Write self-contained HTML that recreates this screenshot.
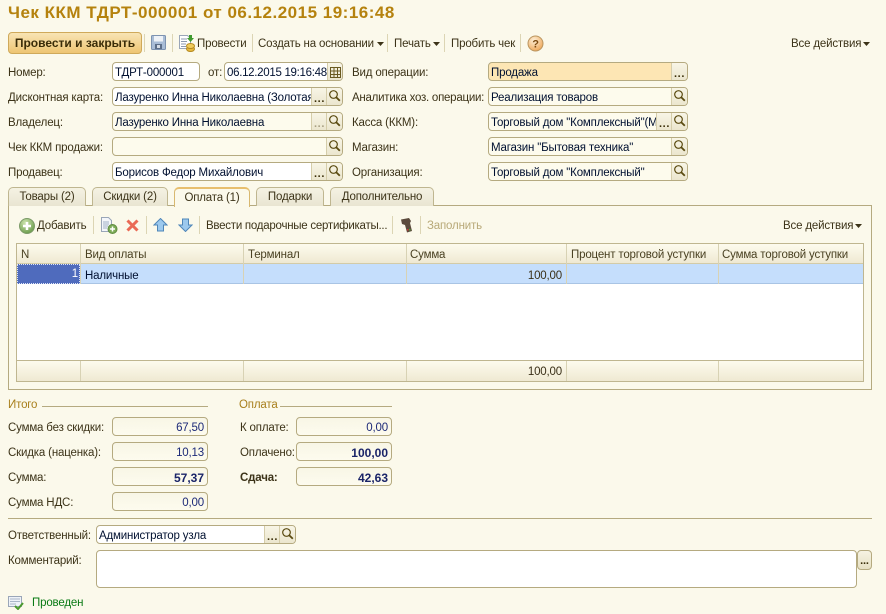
<!DOCTYPE html>
<html lang="ru"><head><meta charset="utf-8"><title>Чек ККМ</title>
<style>
html,body{margin:0;padding:0;width:886px;height:614px;overflow:hidden;background:#fbf9eb}
body{position:relative;font:11.5px "Liberation Sans",sans-serif;color:#3c3318;letter-spacing:-.17px}
div,span.a,svg{position:absolute}
.t{white-space:nowrap;line-height:14px;height:14px;margin-top:1px}
.f{box-sizing:border-box;height:19px;border:1px solid #b5aa80;border-radius:4px;background:#fff;overflow:hidden;color:#001030;line-height:20px;white-space:nowrap;padding-left:2px}
.y{background:#fdfbed}
.n{background:linear-gradient(#f8f6e6,#fdfbee);text-align:right;padding-right:3px;color:#1d2a78}
.b{font-weight:bold;font-size:12px;color:#1a2468;letter-spacing:0}
.bt{position:absolute;top:0;bottom:0;width:15px;background:linear-gradient(#f8f5e6,#ebe6ce);border-left:1px solid #d5cdaa;color:#3a2e08;text-align:center}
.d{right:15px;font-weight:bold;font-size:11px;line-height:22px;letter-spacing:.6px}
.s{right:0}
.s svg{left:1px;top:1px}
.sep{width:1px;background:#dcd5b4}
.tab{box-sizing:border-box;top:187px;height:19px;border:1px solid #bfb690;border-bottom:none;border-radius:5px 5px 0 0;background:linear-gradient(#f5f2e3,#e9e5d2);text-align:center;line-height:19px;color:#3c3318}
.col{width:1px;background:#d8d2b4}
.h{top:247px;color:#4a4122}
.l{height:1px;background:#b5aa80}
</style></head><body>
<svg width="0" height="0" style="position:absolute"><defs>
<g id="m"><circle cx="5.500" cy="5.500" r="3.800" fill="none" stroke="#5a4a10" stroke-width="1.200"/><path d="M8.200 8.200l3.600 3.600" stroke="#5a4a10" stroke-width="1.800"/></g>
</defs></svg>

<div class="t" style="left:8px;top:2px;height:20px;line-height:20px;font-size:17px;font-weight:bold;color:#b5820e;letter-spacing:.5px">Чек ККМ ТДРТ-000001 от 06.12.2015 19:16:48</div>

<!-- main toolbar -->
<div style="left:8px;top:32px;width:134px;height:22px;box-sizing:border-box;border:1px solid #cfa95a;border-radius:4px;background:linear-gradient(#f8e4b4,#eec573);text-align:center;font-weight:bold;font-size:12px;line-height:21px;color:#3a2c08;letter-spacing:0">Провести и закрыть</div>
<div class="sep" style="left:144px;top:34px;height:18px"></div>
<svg style="left:151px;top:35px" width="15" height="15"><rect x=".5" y=".5" width="14" height="14" rx="1" fill="#a9bdd6" stroke="#7d93b0"/><rect x="3" y="1" width="9" height="5.500" fill="#eef2f7"/><rect x="4" y="9" width="7" height="5" fill="#5d6f88"/><rect x="6" y="10" width="3" height="3" fill="#d6dde6"/></svg>
<div class="sep" style="left:172px;top:34px;height:18px"></div>
<svg style="left:179px;top:34px" width="16" height="18"><path d="M.5 1.500h8l3 3v10h-11z" fill="#fff" stroke="#9aa6b8"/><path d="M2 5h6M2 7.500h6M2 10h5M2 12.500h5" stroke="#8c9ab0"/><ellipse cx="11.500" cy="15" rx="4" ry="2.500" fill="#e7b93e" stroke="#b58a20"/><ellipse cx="11.500" cy="12" rx="4" ry="2.500" fill="#f1cc5c" stroke="#b58a20"/><path d="M10 1h3v3h2l-3.500 4L8 4h2z" fill="#3f9a2e"/></svg>
<div class="t" style="left:197px;top:36px">Провести</div>
<div class="sep" style="left:252px;top:34px;height:18px"></div>
<div class="t" style="left:258px;top:36px">Создать на основании</div>
<svg style="left:377px;top:42px" width="7" height="4"><path d="M0 0h7L3.500 4z" fill="#3c3318"/></svg>
<div class="sep" style="left:387px;top:34px;height:18px"></div>
<div class="t" style="left:394px;top:36px">Печать</div>
<svg style="left:433px;top:42px" width="7" height="4"><path d="M0 0h7L3.500 4z" fill="#3c3318"/></svg>
<div class="sep" style="left:444px;top:34px;height:18px"></div>
<div class="t" style="left:451px;top:36px">Пробить чек</div>
<div class="sep" style="left:520px;top:34px;height:18px"></div>
<svg style="left:527px;top:35px" width="17" height="17"><defs><radialGradient id="q" cx=".4" cy=".3" r=".8"><stop offset="0" stop-color="#fdf0d8"/><stop offset="1" stop-color="#eda04c"/></radialGradient></defs><circle cx="8.500" cy="8.500" r="7.500" fill="url(#q)" stroke="#b9955f"/><text x="8.500" y="12.500" text-anchor="middle" font-family="Liberation Sans" font-size="11" font-weight="bold" fill="#7c4a10">?</text></svg>
<div class="t" style="left:791px;top:36px">Все действия</div>
<svg style="left:863px;top:42px" width="7" height="4"><path d="M0 0h7L3.500 4z" fill="#3c3318"/></svg>

<!-- labels left -->
<div class="t" style="left:8px;top:65px">Номер:</div>
<div class="t" style="left:8px;top:90px">Дисконтная карта:</div>
<div class="t" style="left:8px;top:115px">Владелец:</div>
<div class="t" style="left:8px;top:140px">Чек ККМ продажи:</div>
<div class="t" style="left:8px;top:165px">Продавец:</div>
<div class="t" style="left:208px;top:65px">от:</div>
<div class="t" style="left:352px;top:65px">Вид операции:</div>
<div class="t" style="left:352px;top:90px;letter-spacing:-.25px">Аналитика хоз. операции:</div>
<div class="t" style="left:352px;top:115px">Касса (ККМ):</div>
<div class="t" style="left:352px;top:140px">Магазин:</div>
<div class="t" style="left:352px;top:165px">Организация:</div>

<!-- fields left -->
<div class="f" style="left:112px;top:62px;width:88px">ТДРТ-000001</div>
<div class="f" style="left:224px;top:62px;width:119px;letter-spacing:-.3px">06.12.2015 19:16:48<span class="bt s" style="width:14px"><svg width="11" height="11" style="left:2px;top:4px"><path d="M.5 .5h10v10h-10zM.5 4h10M.5 7.500h10M4 .5v10M7.500 .5v10" fill="none" stroke="#6a5a20"/></svg></span></div>
<div class="f" style="left:112px;top:87px;width:231px">Лазуренко Инна Николаевна (Золотая<span class="bt d">...</span><span class="bt s"><svg width="13" height="13"><use href="#m"/></svg></span></div>
<div class="f y" style="left:112px;top:112px;width:231px">Лазуренко Инна Николаевна<span class="bt d" style="color:#a8a083">...</span><span class="bt s"><svg width="13" height="13"><use href="#m"/></svg></span></div>
<div class="f y" style="left:112px;top:137px;width:231px"><span class="bt s"><svg width="13" height="13"><use href="#m"/></svg></span></div>
<div class="f" style="left:112px;top:162px;width:231px">Борисов Федор Михайлович<span class="bt d">...</span><span class="bt s"><svg width="13" height="13"><use href="#m"/></svg></span></div>

<!-- fields right -->
<div class="f" style="left:488px;top:62px;width:200px;background:#fde6b4">Продажа<span class="bt s d" style="right:0;line-height:22px">...</span></div>
<div class="f y" style="left:488px;top:87px;width:200px">Реализация товаров<span class="bt s"><svg width="13" height="13"><use href="#m"/></svg></span></div>
<div class="f y" style="left:488px;top:112px;width:200px">Торговый дом "Комплексный"(М<span class="bt d">...</span><span class="bt s"><svg width="13" height="13"><use href="#m"/></svg></span></div>
<div class="f y" style="left:488px;top:137px;width:200px">Магазин "Бытовая техника"<span class="bt s"><svg width="13" height="13"><use href="#m"/></svg></span></div>
<div class="f y" style="left:488px;top:162px;width:200px">Торговый дом "Комплексный"<span class="bt s"><svg width="13" height="13"><use href="#m"/></svg></span></div>

<!-- tabs panel -->
<div style="left:8px;top:205px;width:864px;height:185px;box-sizing:border-box;border:1px solid #b5aa80"></div>
<div class="tab" style="left:8px;width:78px">Товары (2)</div>
<div class="tab" style="left:92px;width:76px">Скидки (2)</div>
<div class="tab" style="left:174px;width:76px;height:20px;background:#fbf9eb;border-color:#d8b870;border-top:2px solid #e8bf6e;line-height:18px">Оплата (1)</div>
<div class="tab" style="left:256px;width:68px">Подарки</div>
<div class="tab" style="left:330px;width:104px">Дополнительно</div>

<!-- panel toolbar -->
<svg style="left:19px;top:218px" width="16" height="16"><defs><radialGradient id="g" cx=".4" cy=".3" r=".8"><stop offset="0" stop-color="#cfe5b0"/><stop offset="1" stop-color="#5f9440"/></radialGradient></defs><circle cx="8" cy="8" r="7.500" fill="url(#g)" stroke="#7c9a68"/><path d="M8 4v8M4 8h8" stroke="#fff" stroke-width="2.500"/></svg>
<div class="t" style="left:37px;top:218px">Добавить</div>
<div class="sep" style="left:93px;top:216px;height:18px"></div>
<svg style="left:101px;top:217px" width="17" height="17"><path d="M.5 .5h7l3 3v11H.5z" fill="#f4f6fa" stroke="#9aa6b8"/><path d="M2 5h6M2 7h6M2 9h5M2 11h4" stroke="#9fb0c6"/><circle cx="11.500" cy="12" r="4.500" fill="#7dab58" stroke="#5f8c40"/><path d="M11.500 9.500v5M9 12h5" stroke="#fff" stroke-width="1.500"/></svg>
<svg style="left:126px;top:219px" width="13" height="13"><path d="M1.500 1.500l10 10M11.500 1.500l-10 10" stroke="#ea6a55" stroke-width="3"/></svg>
<div class="sep" style="left:146px;top:216px;height:18px"></div>
<svg style="left:153px;top:218px" width="15" height="14"><path d="M7.500 .5L14 7h-3.500v6h-6V7H1z" fill="#9cc9ee" stroke="#4f86b8"/></svg>
<svg style="left:178px;top:218px" width="15" height="14"><path d="M7.500 13.500L14 7h-3.500V1h-6v6H1z" fill="#9cc9ee" stroke="#4f86b8"/></svg>
<div class="sep" style="left:199px;top:216px;height:18px"></div>
<div class="t" style="left:206px;top:218px;letter-spacing:-.25px">Ввести подарочные сертификаты...</div>
<div class="sep" style="left:392px;top:216px;height:18px"></div>
<svg style="left:400px;top:218px" width="14" height="15"><path d="M1 1.500l8-1.500 2 3-1 2 2 8-5 1.500L5 7 2 6z" fill="#5b4a3c"/><rect x="7" y="11" width="1.500" height="1.500" fill="#c33"/><rect x="9" y="11" width="1.500" height="1.500" fill="#4a3"/></svg>
<div class="sep" style="left:420px;top:216px;height:18px"></div>
<div class="t" style="left:427px;top:218px;color:#b8a978">Заполнить</div>
<div class="t" style="left:783px;top:218px">Все действия</div>
<svg style="left:855px;top:224px" width="7" height="4"><path d="M0 0h7L3.500 4z" fill="#3c3318"/></svg>

<!-- grid -->
<div style="left:16px;top:243px;width:848px;height:139px;box-sizing:border-box;border:1px solid #bfb690;background:#fff"></div>
<div style="left:17px;top:244px;width:846px;height:20px;background:linear-gradient(#fdfbee,#efe9d2);border-bottom:1px solid #d3cba8;box-sizing:border-box"></div>
<div style="left:17px;top:264px;width:846px;height:20px;background:#c5defc;border-bottom:1px solid #a9c4e4;box-sizing:border-box"></div>
<div style="left:17px;top:264px;width:63px;height:20px;background:#4f6bbd;box-sizing:border-box;border:1px dotted #dfe6f8;color:#fff;text-align:right;line-height:19px;padding-right:1px">1</div>
<div style="left:17px;top:360px;width:846px;height:21px;background:linear-gradient(#fdfbee,#efe9d2);border-top:1px solid #bfb690;box-sizing:border-box"></div>
<div class="col" style="left:80px;top:244px;height:40px"></div><div class="col" style="left:243px;top:244px;height:40px"></div><div class="col" style="left:406px;top:244px;height:40px"></div><div class="col" style="left:566px;top:244px;height:40px"></div><div class="col" style="left:718px;top:244px;height:40px"></div>
<div class="col" style="left:80px;top:361px;height:20px"></div><div class="col" style="left:243px;top:361px;height:20px"></div><div class="col" style="left:406px;top:361px;height:20px"></div><div class="col" style="left:566px;top:361px;height:20px"></div><div class="col" style="left:718px;top:361px;height:20px"></div>
<div class="t h" style="left:21px">N</div>
<div class="t h" style="left:85px">Вид оплаты</div>
<div class="t h" style="left:248px">Терминал</div>
<div class="t h" style="left:410px">Сумма</div>
<div class="t h" style="left:571px">Процент торговой уступки</div>
<div class="t h" style="left:722px">Сумма торговой уступки</div>
<div class="t" style="left:85px;top:268px;color:#001030">Наличные</div>
<div class="t" style="left:500px;width:62px;text-align:right;top:268px;color:#3a3018">100,00</div>
<div class="t" style="left:500px;width:62px;text-align:right;top:364px;color:#3a3018">100,00</div>

<!-- totals -->
<div class="t" style="left:8px;top:397px;color:#a87f1c">Итого</div><div class="l" style="left:42px;top:406px;width:166px"></div>
<div class="t" style="left:239px;top:397px;color:#a87f1c">Оплата</div><div class="l" style="left:280px;top:406px;width:112px"></div>
<div class="t" style="left:8px;top:420px">Сумма без скидки:</div>
<div class="t" style="left:8px;top:445px">Скидка (наценка):</div>
<div class="t" style="left:8px;top:470px">Сумма:</div>
<div class="t" style="left:8px;top:495px">Сумма НДС:</div>
<div class="t" style="left:240px;top:420px">К оплате:</div>
<div class="t" style="left:240px;top:445px">Оплачено:</div>
<div class="t" style="left:240px;top:470px;font-weight:bold">Сдача:</div>
<div class="f n" style="left:112px;top:417px;width:96px">67,50</div>
<div class="f n" style="left:112px;top:442px;width:96px">10,13</div>
<div class="f n b" style="left:112px;top:467px;width:96px">57,37</div>
<div class="f n" style="left:112px;top:492px;width:96px">0,00</div>
<div class="f n" style="left:296px;top:417px;width:96px">0,00</div>
<div class="f n b" style="left:296px;top:442px;width:96px">100,00</div>
<div class="f n b" style="left:296px;top:467px;width:96px">42,63</div>

<div class="l" style="left:8px;top:518px;width:864px"></div>
<div class="t" style="left:8px;top:528px">Ответственный:</div>
<div class="f" style="left:96px;top:525px;width:200px">Администратор узла<span class="bt d">...</span><span class="bt s"><svg width="13" height="13"><use href="#m"/></svg></span></div>
<div class="t" style="left:8px;top:553px">Комментарий:</div>
<div class="f" style="left:96px;top:550px;width:761px;height:38px"></div>
<div class="f" style="left:857px;top:550px;width:15px;height:20px;padding:0;background:linear-gradient(#f6f3e2,#e6e0c4);text-align:center;font-weight:bold;line-height:21px;font-size:11px;color:#3a2e08">...</div>

<svg style="left:8px;top:596px" width="16" height="14"><rect x=".5" y=".5" width="13" height="10" fill="#eef2f8" stroke="#9aa6b8"/><path d="M2 3h10M2 5.500h10M2 8h6" stroke="#a9b6c8"/><path d="M7 10l3 3 5-6" fill="none" stroke="#4a9a2e" stroke-width="2"/></svg>
<div class="t" style="left:32px;top:595px;color:#0a7a14">Проведен</div>
</body></html>
